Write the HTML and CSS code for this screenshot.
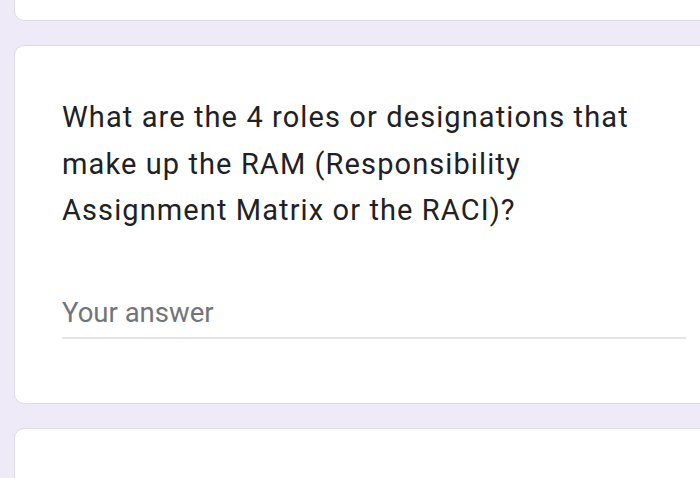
FILE: index.html
```html
<!DOCTYPE html>
<html>
<head>
<meta charset="utf-8">
<link rel="stylesheet" href="styles.css">
</head>
<body>
<div class="page">
  <div class="card card-top"></div>
  <div class="card card-question">
    <div class="question">What are the 4 roles or designations that make up the RAM (Responsibility Assignment Matrix or the RACI)?</div>
    <div class="answer">
      <div class="placeholder">Your answer</div>
      <div class="underline"></div>
    </div>
  </div>
  <div class="card card-bottom"></div>
</div>
</body>
</html>
```
FILE: styles.css
```css
html, body {
  margin: 0;
  padding: 0;
  background: #eeeaf8;
  overflow: hidden;
  width: 700px;
  height: 478px;
}
.page {
  display: flex;
  flex-direction: column;
  gap: 24px;
  padding-left: 14px;
  margin-top: -100px;
  width: 740px;
}
.card {
  background: #ffffff;
  border: 1px solid #dcdae2;
  border-radius: 10px;
  box-sizing: border-box;
}
.card-top {
  height: 121px;
}
.card-question {
  height: 359px;
  padding: 48px 0 0 47px;
  font-family: Roboto, "Noto Sans", sans-serif;
}
.question {
  font-size: 29px;
  letter-spacing: 1.1px;
  line-height: 46.5px;
  color: #202124;
  width: 600px;
}
.answer {
  margin-top: 62px;
  width: 624px;
}
.placeholder {
  font-size: 27.5px;
  color: #70757a;
  line-height: 34px;
}
.underline {
  margin-top: 7px;
  height: 2px;
  background: #e4e4e8;
}
.card-bottom {
  height: 120px;
}
```
